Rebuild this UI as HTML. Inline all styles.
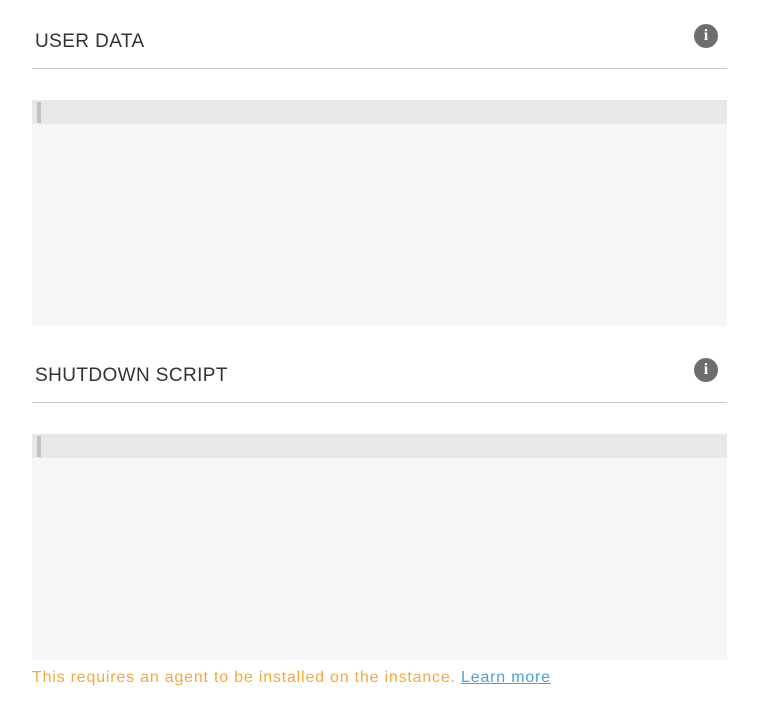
<!DOCTYPE html>
<html><head><style>
body{margin:0;background:#fff;font-family:"Liberation Sans",sans-serif;}
.h{position:absolute;left:35px;font-size:19px;color:#333;letter-spacing:0.4px}
.line{position:absolute;left:32px;width:695px;height:1px;background:#c8c8c8}
.ed{position:absolute;left:32px;width:695px;background:#f6f6f6}
.bar{height:24px;background:#e8e8e8;position:relative}
.cur{position:absolute;left:5px;top:2px;width:4px;height:21px;background:#c2c2c2}
.i{position:absolute;left:694px;width:24px;height:24px;border-radius:50%;background:#6e6e6e;color:#fff;font:bold 16px "Liberation Serif",serif;text-align:center;line-height:24px}
.f{position:absolute;left:32px;top:669px;font-size:16px;color:#f5a83a;letter-spacing:0.8px;white-space:nowrap}
.f a{color:#4f9fd6;text-decoration:underline}
</style></head><body>
<div class="h" style="top:31px">USER DATA</div>
<div class="i" style="top:24px">i</div>
<div class="line" style="top:68px"></div>
<div class="ed" style="top:100px;height:226px"><div class="bar"><div class="cur"></div></div></div>
<div class="h" style="top:365px">SHUTDOWN SCRIPT</div>
<div class="i" style="top:358px">i</div>
<div class="line" style="top:402px"></div>
<div class="ed" style="top:434px;height:226px"><div class="bar"><div class="cur"></div></div></div>
<div class="f">This requires an agent to be installed on the instance. <a>Learn more</a></div>
</body></html>
